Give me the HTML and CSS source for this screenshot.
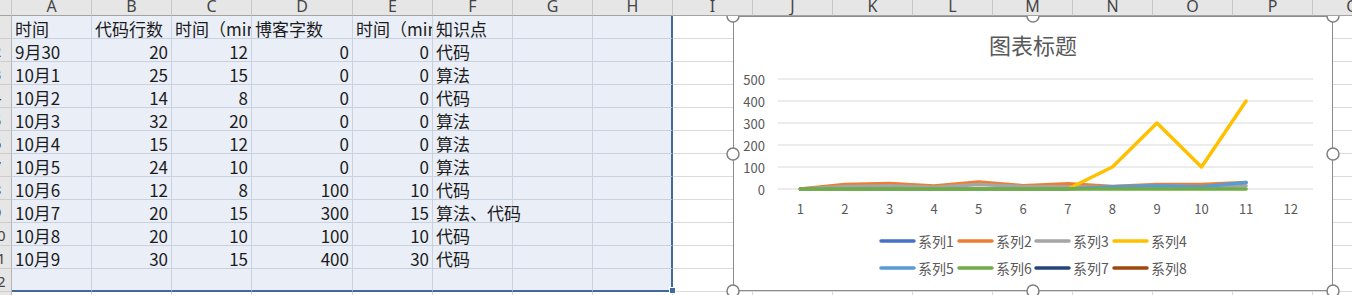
FILE: index.html
```html
<!DOCTYPE html>
<html lang="zh-CN">
<head>
  <meta charset="UTF-8">
  <title>工作表</title>
  <link rel="stylesheet" href="styles.css">
</head>
<body>
  <div class="sheet" id="sheet">
    <div class="fill-handle"></div>

    <div class="chart">
      <svg width="600" height="275" viewBox="0 0 600 275">
        <rect class="frame" x="0.5" y="0.5" width="599" height="274"></rect>
        <text class="title" x="300" y="28">图表标题</text>

        <g class="grid">
          <line x1="45" y1="63" x2="580" y2="63"></line>
          <line x1="45" y1="85" x2="580" y2="85"></line>
          <line x1="45" y1="107" x2="580" y2="107"></line>
          <line x1="45" y1="129" x2="580" y2="129"></line>
          <line x1="45" y1="151" x2="580" y2="151"></line>
          <line x1="45" y1="173" x2="580" y2="173"></line>
        </g>

        <g class="y-labels">
          <text x="32" y="63">500</text>
          <text x="32" y="85">400</text>
          <text x="32" y="107">300</text>
          <text x="32" y="129">200</text>
          <text x="32" y="151">100</text>
          <text x="32" y="173">0</text>
        </g>

        <g class="x-labels">
          <text x="67.3" y="192">1</text>
          <text x="111.9" y="192">2</text>
          <text x="156.5" y="192">3</text>
          <text x="201" y="192">4</text>
          <text x="245.6" y="192">5</text>
          <text x="290.2" y="192">6</text>
          <text x="334.8" y="192">7</text>
          <text x="379.4" y="192">8</text>
          <text x="424" y="192">9</text>
          <text x="468.5" y="192">10</text>
          <text x="513.1" y="192">11</text>
          <text x="557.7" y="192">12</text>
        </g>

        <!-- 系列2 代码行数 -->
        <polyline class="s2" points="67.3,173 111.9,168.6 156.5,167.5 201,169.9 245.6,166 290.2,169.7 334.8,167.7 379.4,170.4 424,168.6 468.5,168.6 513.1,166.4"></polyline>
        <!-- 系列3 时间 -->
        <polyline class="s3" points="67.3,173 111.9,170.4 156.5,169.7 201,171.2 245.6,168.6 290.2,170.4 334.8,170.8 379.4,171.2 424,169.7 468.5,170.8 513.1,169.7"></polyline>
        <!-- 系列4 博客字数 -->
        <polyline class="s4" points="67.3,173 111.9,173 156.5,173 201,173 245.6,173 290.2,173 334.8,173 379.4,151 424,107 468.5,151 513.1,85"></polyline>
        <!-- 系列5 时间 -->
        <polyline class="s5" points="67.3,173 111.9,173 156.5,173 201,173 245.6,173 290.2,173 334.8,173 379.4,170.8 424,169.7 468.5,170.8 513.1,166.4"></polyline>
        <!-- 系列6 知识点 -->
        <polyline class="s6" points="67.3,173 111.9,173 156.5,173 201,173 245.6,173 290.2,173 334.8,173 379.4,173 424,173 468.5,173 513.1,173"></polyline>

        <g class="legend">
          <line class="s1" x1="148" y1="225" x2="181" y2="225"></line>
          <text x="185" y="225">系列1</text>
          <line class="s2" x1="226" y1="225" x2="259" y2="225"></line>
          <text x="263" y="225">系列2</text>
          <line class="s3" x1="303" y1="225" x2="336" y2="225"></line>
          <text x="340" y="225">系列3</text>
          <line class="s4" x1="381" y1="225" x2="414" y2="225"></line>
          <text x="418" y="225">系列4</text>

          <line class="s5" x1="148" y1="252" x2="181" y2="252"></line>
          <text x="185" y="252">系列5</text>
          <line class="s6" x1="226" y1="252" x2="259" y2="252"></line>
          <text x="263" y="252">系列6</text>
          <line class="s7" x1="303" y1="252" x2="336" y2="252"></line>
          <text x="340" y="252">系列7</text>
          <line class="s8" x1="381" y1="252" x2="414" y2="252"></line>
          <text x="418" y="252">系列8</text>
        </g>

        <g class="handles">
          <circle cx="0" cy="0" r="6"></circle>
          <circle cx="300" cy="0" r="6"></circle>
          <circle cx="600" cy="0" r="6"></circle>
          <circle cx="0" cy="138" r="6"></circle>
          <circle cx="600" cy="138" r="6"></circle>
          <circle cx="0" cy="275" r="6"></circle>
          <circle cx="300" cy="275" r="6"></circle>
          <circle cx="600" cy="275" r="6"></circle>
        </g>
      </svg>
    </div>
  </div>

  <script>
    // 表格数据
    let rows = [
      ['时间', '代码行数', '时间（min）', '博客字数', '时间（min）', '知识点'],
      ['9月30', 20, 12, 0, 0, '代码'],
      ['10月1', 25, 15, 0, 0, '算法'],
      ['10月2', 14, 8, 0, 0, '代码'],
      ['10月3', 32, 20, 0, 0, '算法'],
      ['10月4', 15, 12, 0, 0, '算法'],
      ['10月5', 24, 10, 0, 0, '算法'],
      ['10月6', 12, 8, 100, 10, '代码'],
      ['10月7', 20, 15, 300, 15, '算法、代码'],
      ['10月8', 20, 10, 100, 10, '代码'],
      ['10月9', 30, 15, 400, 30, '代码'],
      [],
      []
    ];
    let letters = 'ABCDEFGHIJKLMNOPQ';

    let html = '<div class="col-head"></div>';
    for (let l of letters) {
      html += `<div class="col-head">${l}</div>`;
    }

    rows.forEach((row, r) => {
      html += `<div class="row-head"><span>${r + 1}</span></div>`;
      for (let c = 0; c < letters.length; c++) {
        let value = row[c];
        let cls = ['cell'];
        if (r < 12 && c < 8) cls.push('sel');
        if (r < 12 && c === 7) cls.push('edge-r');
        if (r === 11 && c < 8) cls.push('edge-b');
        if (typeof value === 'number') cls.push('num');
        // 文字溢出到右侧空单元格
        if (value === '算法、代码') cls.push('spill');
        html += `<div class="${cls.join(' ')}">${value === undefined ? '' : value}</div>`;
      }
    });

    document.getElementById('sheet').insertAdjacentHTML('afterbegin', html);
  </script>
</body>
</html>
```

FILE: styles.css
```css
body {
  margin: 0;
  background: #fff;
  font-family: "Noto Sans CJK SC", sans-serif;
  overflow: hidden;
}
.sheet {
  position: relative;
  display: grid;
  grid-template-columns: 12px 80px 80px 80px 101px repeat(13, 80px);
  grid-template-rows: 16px repeat(13, 23px);
  width: max-content;
}
.col-head {
  position: relative;
  z-index: 3;
  box-sizing: border-box;
  background: #e6e6e6;
  border-right: 1px solid #c6c6c6;
  border-bottom: 1px solid #a3a3a3;
  font-family: "Noto Sans", sans-serif;
  font-size: 16px;
  line-height: 13px;
  color: #444;
  text-align: center;
  overflow: hidden;
}
.row-head {
  box-sizing: border-box;
  background: #e6e6e6;
  border-right: 1px solid #b5b5b5;
  border-bottom: 1px solid #cdcdcd;
  padding-top: 2px;
  font-family: "Noto Sans", sans-serif;
  font-size: 15px;
  line-height: 21px;
  color: #444;
  overflow: hidden;
}
.row-head span {
  display: block;
  width: 30px;
  margin-left: -18px;
  text-align: center;
}
.cell {
  box-sizing: border-box;
  border-right: 1px solid #dadada;
  border-bottom: 1px solid #dadada;
  padding: 2px 3px 0;
  font-size: 17px;
  line-height: 21px;
  color: #1c1c1c;
  white-space: nowrap;
  overflow: hidden;
}
.cell.sel {
  background: #e9eef7;
  border-color: #c9d1de;
}
.cell.num {
  text-align: right;
}
.cell.edge-r {
  border-right: 2px solid #41689f;
}
.cell.edge-b {
  border-bottom: 2px solid #41689f;
}
.cell.spill {
  position: relative;
  z-index: 1;
  overflow: visible;
}
.fill-handle {
  position: absolute;
  left: 669px;
  top: 287px;
  z-index: 1;
  width: 5px;
  height: 5px;
  background: #41689f;
  border: 1px solid #fff;
}

/* 图表 */
.chart {
  position: absolute;
  left: 733px;
  top: 16px;
  z-index: 2;
  width: 600px;
  height: 275px;
}
.chart svg {
  display: block;
  overflow: visible;
  font-family: "Noto Sans CJK SC", sans-serif;
}
.frame {
  fill: #fff;
  stroke: #8c8c8c;
  stroke-width: 1;
}
.title {
  font-size: 22px;
  fill: #595959;
  text-anchor: middle;
  dominant-baseline: central;
}
.grid line {
  stroke: #d9d9d9;
  stroke-width: 1;
}
.y-labels text {
  font-size: 13px;
  fill: #595959;
  text-anchor: end;
  dominant-baseline: central;
}
.x-labels text {
  font-size: 13px;
  fill: #595959;
  text-anchor: middle;
  dominant-baseline: central;
}
polyline {
  fill: none;
  stroke-width: 3.5;
  stroke-linejoin: round;
  stroke-linecap: round;
}
.legend line {
  stroke-width: 3.5;
  stroke-linecap: round;
}
.legend text {
  font-size: 14px;
  fill: #595959;
  dominant-baseline: central;
}
.s1 { stroke: #4472c4; }
.s2 { stroke: #ed7d31; }
.s3 { stroke: #a5a5a5; }
.s4 { stroke: #ffc000; }
.s5 { stroke: #5b9bd5; }
.s6 { stroke: #70ad47; }
.s7 { stroke: #264478; }
.s8 { stroke: #9e480e; }
.handles circle {
  fill: #fff;
  stroke: #7f7f7f;
  stroke-width: 1.5;
}
```
